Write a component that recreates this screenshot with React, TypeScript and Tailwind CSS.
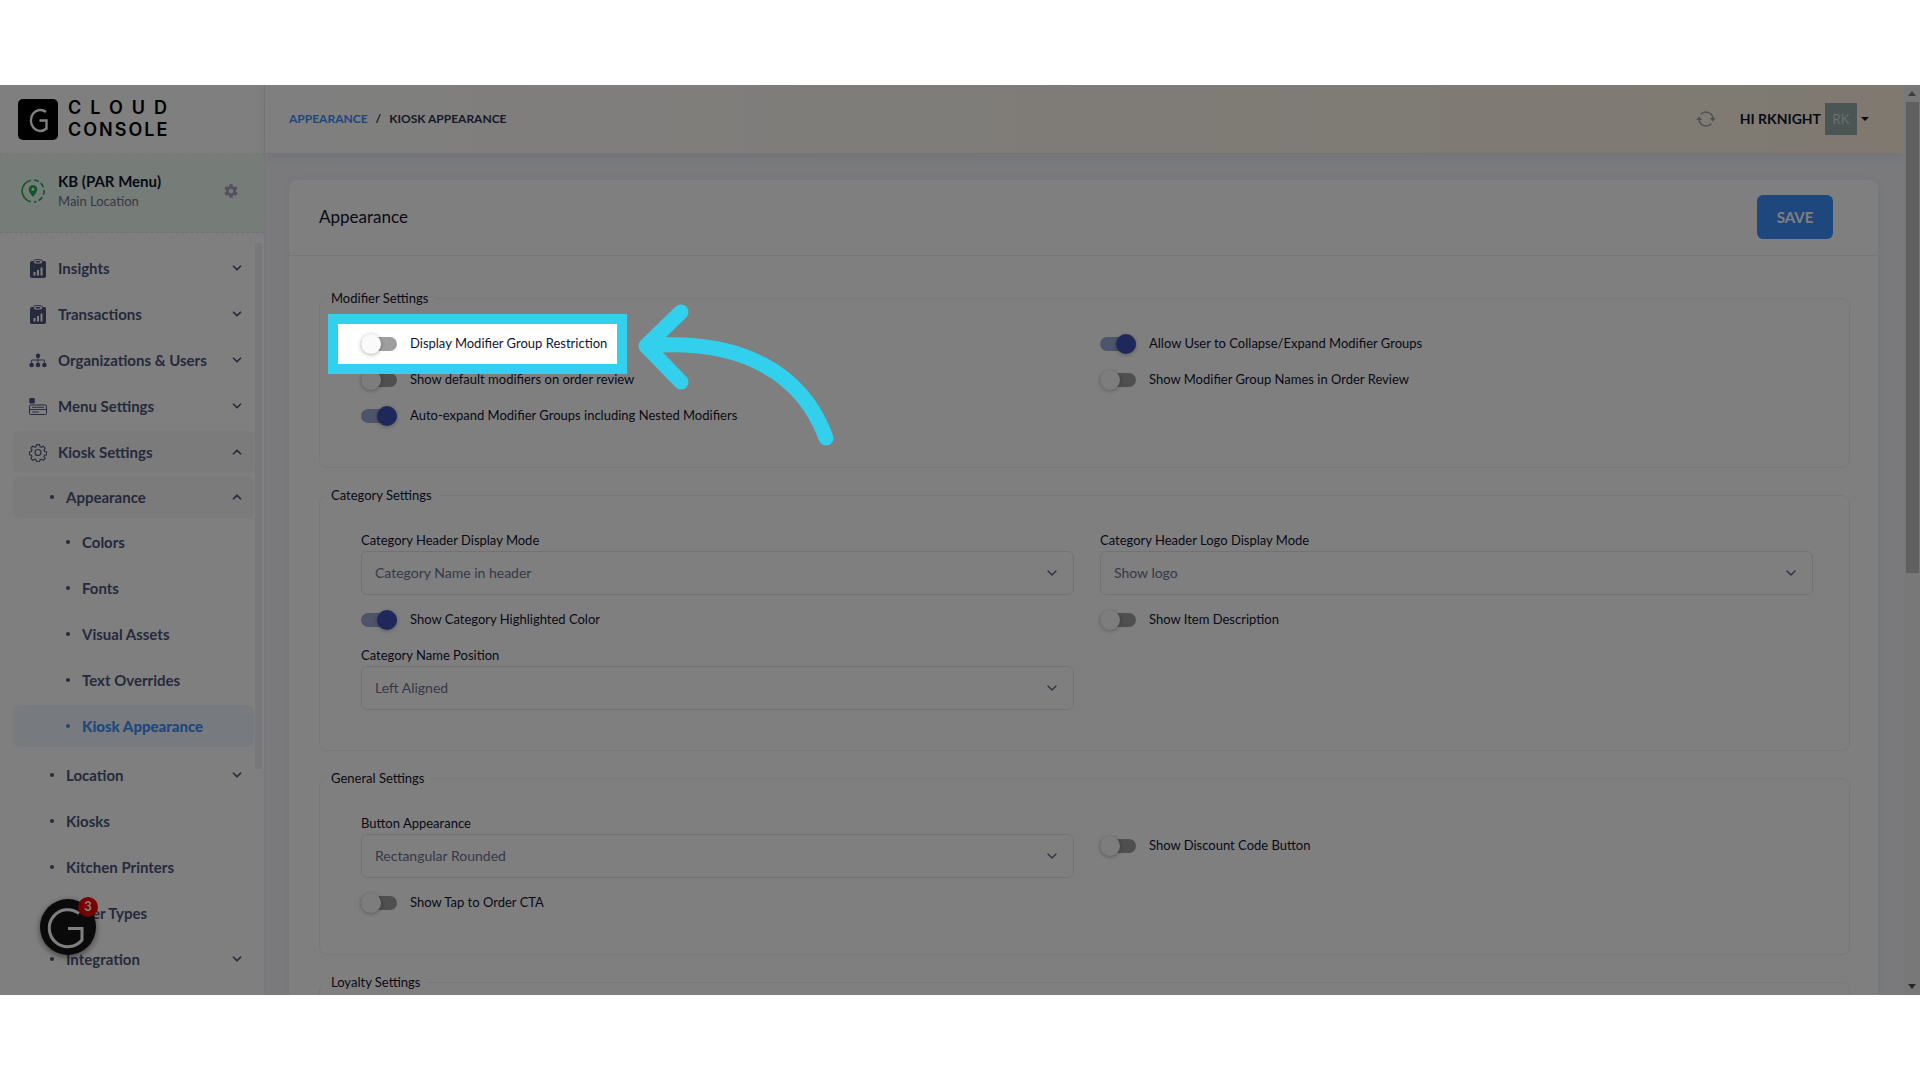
import React from 'react';
import { ChevronDown, ChevronUp } from 'lucide-react';

type IconProps = { className?: string };

const ReportIcon: React.FC<IconProps> = ({ className }) => (
  <svg viewBox="0 0 18 19" className={className} aria-hidden="true">
    <rect x="1" y="2" width="16" height="17" rx="1.800" fill="currentColor" />
    <rect x="4.500" y=".6" width="9" height="4.400" rx="2.200" fill="#fff" stroke="currentColor" strokeWidth=".9" />
    <rect x="6.500" y="2" width="5" height="1.500" rx=".7" fill="currentColor" />
    <path d="M4.500 13h2v3.500h-2zM8 11h2v5.500H8zM11.500 8.500h2v8h-2z" fill="#fff" />
  </svg>
);

const OrgIcon: React.FC<IconProps> = ({ className }) => (
  <svg viewBox="0 0 18 14" className={className} aria-hidden="true">
    <g fill="currentColor">
      <circle cx="9" cy="2.300" r="2.200" />
      <circle cx="2.600" cy="11.500" r="2.300" />
      <circle cx="9" cy="11.500" r="2.300" />
      <circle cx="15.400" cy="11.500" r="2.300" />
    </g>
    <path d="M9 4v6M2.600 10V6.500h12.800V10" fill="none" stroke="currentColor" strokeWidth=".9" />
  </svg>
);

const MenuIcon: React.FC<IconProps> = ({ className }) => (
  <svg viewBox="0 0 18 18" className={className} aria-hidden="true">
    <rect x=".3" y=".5" width="5.500" height="5.500" rx="1.200" fill="currentColor" />
    <g fill="none" stroke="currentColor">
      <rect x=".5" y="7.500" width="17" height="9.500" rx="1.200" />
      <path d="M.5 12h17M3 9.800h12M3 14.500h7" strokeWidth=".9" />
    </g>
  </svg>
);

const CogIcon: React.FC<IconProps> = ({ className }) => (
  <svg viewBox="0 0 24 24" className={className} fill="none" stroke="currentColor" strokeWidth="1.500" strokeLinejoin="round" aria-hidden="true">
    <circle cx="12" cy="12" r="4" />
    <path d="M10 1.500h4l.6 2.800 1.900.8 2.400-1.600 2.700 2.800-1.600 2.400.8 1.900 2.700.5v3.800l-2.700.6-.8 1.900 1.600 2.400-2.700 2.700-2.400-1.600-1.900.8-.6 2.800h-4l-.6-2.800-1.900-.8-2.400 1.600-2.700-2.700L4 17.400l-.8-1.900-2.700-.6v-3.800l2.700-.5L4 8.700 2.400 6.300l2.700-2.800 2.400 1.600 1.900-.8z" />
  </svg>
);

const GearIcon: React.FC<IconProps> = ({ className }) => (
  <svg viewBox="0 0 24 24" className={className} fill="currentColor" aria-hidden="true">
    <path d="M19.430 12.980c.04-.32.07-.64.07-.98s-.03-.66-.07-.98l2.110-1.650c.19-.15.24-.42.12-.64l-2-3.460c-.12-.22-.39-.3-.61-.22l-2.490 1c-.52-.4-1.080-.73-1.690-.98l-.38-2.650C14.460 2.180 14.250 2 14 2h-4c-.25 0-.46.18-.49.42l-.38 2.650c-.61.25-1.170.59-1.690.98l-2.490-1c-.23-.09-.49 0-.61.22l-2 3.460c-.13.22-.07.49.12.64l2.110 1.650c-.04.32-.07.65-.07.98s.03.66.07.98l-2.110 1.650c-.19.15-.24.42-.12.64l2 3.460c.12.22.39.3.61.22l2.490-1c.52.4 1.080.73 1.690.98l.38 2.650c.03.24.24.42.49.42h4c.25 0 .46-.18.49-.42l.38-2.650c.61-.25 1.170-.59 1.690-.98l2.490 1c.23.09.49 0 .61-.22l2-3.460c.12-.22.07-.49-.12-.64l-2.110-1.650zM12 15.500c-1.930 0-3.500-1.570-3.500-3.500s1.570-3.500 3.500-3.500 3.500 1.570 3.500 3.500-1.570 3.500-3.500 3.500z" />
  </svg>
);

const LocationIcon: React.FC<IconProps> = ({ className }) => (
  <svg viewBox="0 0 24 24" className={className} fill="none" aria-hidden="true">
    <path d="M10 1.200A11 11 0 0 0 10 22.800" stroke="#1fae4f" strokeWidth="1.600" />
    <path d="M13 1.050A11 11 0 0 1 22.950 13.500A11 11 0 0 1 13 22.950" stroke="#1fae4f" strokeWidth="1.600" strokeDasharray="5 2.500" />
    <path d="M12 6a4.300 4.300 0 0 0-4.300 4.300C7.700 13.500 12 18 12 18s4.300-4.500 4.300-7.700A4.300 4.300 0 0 0 12 6zm0 5.800a1.600 1.600 0 1 1 0-3.200 1.600 1.600 0 0 1 0 3.200z" fill="#1fae4f" />
  </svg>
);

const RefreshIcon: React.FC<IconProps> = ({ className }) => (
  <svg viewBox="0 0 20 18" className={className} fill="none" aria-hidden="true">
    <path d="M4.600 4.500A7 7 0 0 1 16.900 8.500M15.400 13.500A7 7 0 0 1 3.100 9.500" stroke="currentColor" strokeWidth="1.500" />
    <path d="M13.800 8h6l-3 3.600zM6.200 10h-6l3-3.600z" fill="currentColor" />
  </svg>
);

const LogoMark: React.FC<IconProps> = ({ className }) => (
  <svg viewBox="0 0 40 41" className={className} fill="none" aria-hidden="true">
    <rect width="40" height="41" rx="5" fill="#000" />
    <path d="M28 13A9.500 10.500 0 1 0 28.500 29.500V21.500H21.500" stroke="#fff" strokeWidth="2.400" />
  </svg>
);

type NavItem = {
  label: string;
  icon?: React.FC<IconProps>;
  expandable?: boolean;
  open?: boolean;
  active?: boolean;
  children?: NavItem[];
};

const NAV_ITEMS: NavItem[] = [
  { label: 'Insights', icon: ReportIcon, expandable: true },
  { label: 'Transactions', icon: ReportIcon, expandable: true },
  { label: 'Organizations & Users', icon: OrgIcon, expandable: true },
  { label: 'Menu Settings', icon: MenuIcon, expandable: true },
  {
    label: 'Kiosk Settings',
    icon: CogIcon,
    expandable: true,
    open: true,
    children: [
      {
        label: 'Appearance',
        expandable: true,
        open: true,
        children: [
          { label: 'Colors' },
          { label: 'Fonts' },
          { label: 'Visual Assets' },
          { label: 'Text Overrides' },
          { label: 'Kiosk Appearance', active: true },
        ],
      },
      { label: 'Location', expandable: true },
      { label: 'Kiosks' },
      { label: 'Kitchen Printers' },
      { label: 'Order Types' },
      { label: 'Integration', expandable: true },
    ],
  },
];

const LEVEL_PADDING = ['pl-4', 'pl-[37px]', 'pl-[53px]'];

const NavList: React.FC<{ items: NavItem[]; level?: number }> = ({ items, level = 0 }) => (
  <ul className={`flex flex-col gap-1 ${level > 0 ? 'pt-[3px]' : ''} ${level === 2 ? 'pb-[3px]' : ''}`}>
    {items.map((item) => {
      const Icon = item.icon;
      const Chevron = item.open ? ChevronUp : ChevronDown;
      const tone = item.active
        ? 'bg-[#eff6ff] text-[#3a8ffb] font-black'
        : item.open
          ? 'bg-[#f7f7f8] text-[#4b5478] font-bold'
          : 'text-[#4b5478] font-bold';
      return (
        <li key={item.label}>
          <a href="#" className={`flex h-[42px] items-center rounded-md pr-2.5 text-[15px] ${LEVEL_PADDING[level]} ${tone}`}>
            {Icon ? (
              <Icon className="mr-[11px] h-[19px] w-[18px]" />
            ) : (
              <span className="mr-3 h-1 w-1 rounded-full bg-current" />
            )}
            <span className="flex-1">{item.label}</span>
            {item.expandable && <Chevron className="h-3.5 w-3.5" strokeWidth={3} />}
          </a>
          {item.children && <NavList items={item.children} level={level + 1} />}
        </li>
      );
    })}
  </ul>
);

const Sidebar: React.FC = () => (
  <aside className="flex w-[264px] shrink-0 flex-col bg-white">
    <div className="flex h-[69px] shrink-0 items-center gap-2.5 border-b border-dashed border-[#eceef4] pl-[18px]">
      <LogoMark className="h-[41px] w-10" />
      <div className="font-[Inter,sans-serif] text-[18px] leading-[22px] font-semibold text-black">
        <div className="tracking-[9px]">CLOUD</div>
        <div className="tracking-[2px]">CONSOLE</div>
      </div>
    </div>

    <div className="flex h-[79px] shrink-0 items-center border-b border-dashed border-[#d8e4da] bg-[#edf9ef] pr-[25px] pb-1 pl-[21px]">
      <LocationIcon className="mr-[13px] h-6 w-6" />
      <div className="flex-1">
        <div className="text-[15px] leading-5 font-bold text-[#111430]">KB (PAR Menu)</div>
        <div className="text-[13px] leading-5 text-[#6c7293]">Main Location</div>
      </div>
      <button type="button" aria-label="Location settings" className="text-[#a2a5b9]">
        <GearIcon className="h-4 w-4" />
      </button>
    </div>

    <div className="flex min-h-0 flex-1">
      <nav className="flex-1 overflow-hidden pt-3.5 pr-px pl-[13px]">
        <NavList items={NAV_ITEMS} />
      </nav>
      <div className="mt-2.5 mr-[2px] h-[526px] w-[7px] bg-[#f1f1f1]" />
    </div>
  </aside>
);

const TopBar: React.FC = () => (
  <header className="flex h-[68px] shrink-0 items-center justify-between bg-linear-to-r from-white to-[#fff3e1] pr-[35px] pl-6 shadow-[0_2px_14px_rgba(70,70,110,0.1)]">
    <nav className="flex gap-2 text-xs font-bold text-[#2f3454]">
      <a href="#" className="text-[#3a8ffb]">APPEARANCE</a>
      <span>/</span>
      <span>KIOSK APPEARANCE</span>
    </nav>
    <div className="flex items-center">
      <button type="button" aria-label="Refresh" className="mr-6 text-[#9a9db5]">
        <RefreshIcon className="h-[18px] w-5" />
      </button>
      <button type="button" className="flex items-center gap-1 text-sm font-bold text-[#111430]">
        HI RKNIGHT
        <span className="flex h-8 w-8 items-center justify-center bg-[#96aaa6] text-[13px] font-normal text-[#d9dfdd]">RK</span>
        <svg viewBox="0 0 8 4" className="h-1 w-2" fill="currentColor" aria-hidden="true">
          <path d="M0 0h8L4 4z" />
        </svg>
      </button>
    </div>
  </header>
);

const Toggle: React.FC<{ label: string; on?: boolean; children?: React.ReactNode }> = ({ label, on, children }) => (
  <div className="relative flex min-h-9 items-center">
    <label className="flex items-center gap-[13px] text-[13px] text-[#111430]">
      <input type="checkbox" role="switch" defaultChecked={on} className="peer sr-only" />
      <span className={`flex h-3.5 w-9 items-center rounded-full ${on ? 'justify-end bg-[#9fa8da]' : 'bg-[#9e9e9e]'}`}>
        <span className={`h-5 w-5 shrink-0 rounded-full shadow-[0_1px_4px_rgba(0,0,0,0.3)] ${on ? 'bg-[#3f51b5]' : 'bg-[#fafafa]'}`} />
      </span>
      {label}
    </label>
    {children}
  </div>
);

const SelectField: React.FC<{ id: string; label: string; value: string }> = ({ id, label, value }) => (
  <div className="pt-2 pb-[7px]">
    <label htmlFor={id} className="block text-[13px] leading-[18px] text-[#111430]">
      {label}
    </label>
    <div className="relative mt-0.5">
      <select id={id} className="h-11 w-full appearance-none rounded-md border border-[#e2e5ec] bg-white px-[13px] text-sm text-[#6c7293]">
        <option>{value}</option>
      </select>
      <ChevronDown className="pointer-events-none absolute top-3.5 right-3.5 h-4 w-4 text-[#5d627d]" />
    </div>
  </div>
);

const Section: React.FC<{ title: string; children?: React.ReactNode }> = ({ title, children }) => (
  <fieldset className="rounded-lg border border-[#f0f1f5]">
    <legend className="ml-1 px-[7px] text-[13px] leading-5 text-[#111430]">{title}</legend>
    <div className="grid grid-cols-2 items-center gap-x-[26px] pt-[18px] pr-9 pb-[33px] pl-[41px]">{children}</div>
  </fieldset>
);

/* Dims everything around the highlighted row and points an arrow at it */
const Spotlight: React.FC = () => (
  <>
    <div className="pointer-events-none absolute -top-3 -left-[33px] z-40 h-[60px] w-[299px] border-10 border-[#33d0ee] shadow-[0_0_0_2400px_rgba(0,0,0,0.5)]" />
    <svg
      viewBox="0 0 196 144"
      className="pointer-events-none absolute -top-[22px] left-[277px] z-40 h-36 w-[196px]"
      fill="none"
      stroke="#33d0ee"
      strokeWidth="15"
      strokeLinecap="round"
      strokeLinejoin="round"
      aria-hidden="true"
    >
      <path d="M43 8L8 42L43 78M8 42C102 34 164 68 188 134" />
    </svg>
  </>
);

const ChatLauncher: React.FC = () => (
  <button type="button" aria-label="Open help" className="absolute bottom-10 left-10 z-30 h-14 w-14 rounded-full bg-[#141414] shadow-[0_2px_6px_rgba(0,0,0,0.5)]">
    <svg viewBox="0 0 56 56" className="h-14 w-14" fill="none" aria-hidden="true">
      <path d="M39 14.500A18.500 18.500 0 1 0 42 41V29.500H28" stroke="#fff" strokeWidth="3" />
    </svg>
    <span className="absolute -top-0.5 -right-0.5 flex h-5 w-5 items-center justify-center rounded-full bg-[#f00000] text-[13px] font-bold text-white">3</span>
  </button>
);

const PageScrollbar: React.FC = () => (
  <div className="flex w-4 shrink-0 flex-col items-center justify-between bg-[#f1f1f1]">
    <div className="flex w-full flex-col items-center">
      <svg viewBox="0 0 8 5" className="my-1.5 h-[5px] w-2" fill="#7d7d7d" aria-hidden="true">
        <path d="M0 5h8L4 0z" />
      </svg>
      <div className="h-[471px] w-[13px] bg-[#c1c1c1]" />
    </div>
    <svg viewBox="0 0 8 5" className="my-1.5 h-[5px] w-2" fill="#505050" aria-hidden="true">
      <path d="M0 0h8L4 5z" />
    </svg>
  </div>
);

export default function App() {
  return (
    <div className="h-screen bg-white pt-[85px] pb-[85px] font-[Lato,sans-serif]">
      <div className="relative flex h-full overflow-hidden bg-[#f4f5fa]">
        <Sidebar />

        <div className="flex min-w-0 flex-1 flex-col border-l border-[#eef0f6]">
          <TopBar />
          <main className="min-h-0 flex-1 pt-[27px] pr-[26px] pl-6">
            <div className="rounded-lg bg-white shadow-[0_0_13px_rgba(82,63,105,0.05)]">
              <div className="flex h-[76px] items-center justify-between border-b border-[#ebedf2] pr-[45px] pb-px pl-[30px]">
                <h1 className="text-[17px] text-[#111430]">Appearance</h1>
                <button type="button" className="h-11 w-[76px] rounded-md bg-[#3a8ffb] text-[15px] font-bold text-white">
                  SAVE
                </button>
              </div>

              <form className="flex flex-col gap-[17px] pt-8 pr-7 pl-[30px]">
                <Section title="Modifier Settings">
                  <Toggle label="Display Modifier Group Restriction">
                    <Spotlight />
                  </Toggle>
                  <Toggle label="Allow User to Collapse/Expand Modifier Groups" on />
                  <Toggle label="Show default modifiers on order review" />
                  <Toggle label="Show Modifier Group Names in Order Review" />
                  <Toggle label="Auto-expand Modifier Groups including Nested Modifiers" on />
                </Section>

                <Section title="Category Settings">
                  <SelectField id="header-mode" label="Category Header Display Mode" value="Category Name in header" />
                  <SelectField id="logo-mode" label="Category Header Logo Display Mode" value="Show logo" />
                  <Toggle label="Show Category Highlighted Color" on />
                  <Toggle label="Show Item Description" />
                  <SelectField id="name-position" label="Category Name Position" value="Left Aligned" />
                </Section>

                <Section title="General Settings">
                  <SelectField id="button-appearance" label="Button Appearance" value="Rectangular Rounded" />
                  <Toggle label="Show Discount Code Button" />
                  <Toggle label="Show Tap to Order CTA" />
                </Section>

                <Section title="Loyalty Settings" />
              </form>
            </div>
          </main>
        </div>

        <PageScrollbar />
        <ChatLauncher />
      </div>
    </div>
  );
}
